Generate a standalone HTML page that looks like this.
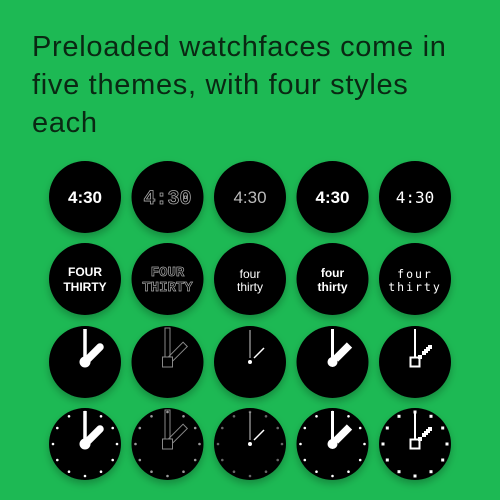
<!DOCTYPE html>
<html><head><meta charset="utf-8"><style>
html,body{margin:0;padding:0;width:500px;height:500px;background:#1db954;overflow:hidden}
h1{position:absolute;left:32px;top:28px;margin:0;width:428px;font:400 29px/38px "Liberation Sans",sans-serif;color:#0a2813;letter-spacing:0.7px}
svg{position:absolute;left:0;top:0}
</style></head><body>
<h1>Preloaded watchfaces come in five themes, with four styles each</h1>
<svg width="500" height="500" viewBox="0 0 500 500">
<defs>
<filter id="sh" x="-30%" y="-30%" width="160%" height="170%"><feDropShadow dx="0" dy="4" stdDeviation="4" flood-color="#000" flood-opacity="0.25"/></filter>
<g id="c"><circle r="36" fill="#000" filter="url(#sh)"/></g>
<g id="t1"><circle cx="0" cy="-32" r="1.3" fill="#fff"/><circle cx="16" cy="-27.7" r="1.3" fill="#fff"/><circle cx="27.7" cy="-16" r="1.3" fill="#fff"/><circle cx="32" cy="0" r="1.3" fill="#fff"/><circle cx="27.7" cy="16" r="1.3" fill="#fff"/><circle cx="16" cy="27.7" r="1.3" fill="#fff"/><circle cx="0" cy="32" r="1.3" fill="#fff"/><circle cx="-16" cy="27.7" r="1.3" fill="#fff"/><circle cx="-27.7" cy="16" r="1.3" fill="#fff"/><circle cx="-32" cy="0" r="1.3" fill="#fff"/><circle cx="-27.7" cy="-16" r="1.3" fill="#fff"/><circle cx="-16" cy="-27.7" r="1.3" fill="#fff"/></g>
<g id="ha"><line x1="0" y1="0" x2="0" y2="-33" stroke="#fff" stroke-width="3.5"/><line x1="2" y1="-2" x2="15" y2="-15" stroke="#fff" stroke-width="7.5" stroke-linecap="round"/><circle r="5.5" fill="#fff"/></g>
<g id="hb" fill="none" stroke="#888" stroke-width="1"><rect x="-2.5" y="-34" width="5" height="29"/><rect x="-3" y="-25" width="6" height="20" transform="rotate(45)"/><rect x="-5" y="-5" width="10" height="10" fill="#000"/></g>
<g id="hc"><line x1="0" y1="-4" x2="0" y2="-32" stroke="#aaa" stroke-width="1.2"/><line x1="4" y1="-4" x2="14" y2="-14" stroke="#fff" stroke-width="1.5"/><circle r="2" fill="#fff"/></g>
<g id="hd"><line x1="0" y1="0" x2="0" y2="-33" stroke="#fff" stroke-width="3"/><line x1="3" y1="-3" x2="17" y2="-17" stroke="#fff" stroke-width="7.5"/><circle r="5" fill="#fff"/></g>
<g id="he" fill="#fff"><rect x="-1" y="-33" width="2" height="28"/><path d="M3,-3 h4 v-4 h4 v-4 h4 v-4 h-4 v4 h-4 v4 h-4z"/><rect x="9" y="-13" width="4" height="4"/><rect x="13" y="-17" width="4" height="4"/><rect x="-4.5" y="-4.5" width="9" height="9" fill="none" stroke="#fff" stroke-width="2"/></g>
</defs>
<g font-family="Liberation Sans,sans-serif" text-anchor="middle" fill="#fff">
<use href="#c" x="85" y="197"/><use href="#c" x="167.5" y="197"/><use href="#c" x="250" y="197"/><use href="#c" x="332.5" y="197"/><use href="#c" x="415" y="197"/>
<text x="85" y="203" font-size="17" font-weight="bold">4:30</text>
<text x="167.5" y="204" font-size="20" font-weight="bold" fill="none" stroke="#aaa" stroke-width="0.8" font-family="Liberation Mono,monospace">4:30</text>
<text x="250" y="203" font-size="17" fill="#bbb" font-weight="300">4:30</text>
<text x="332.5" y="203" font-size="17" font-weight="bold">4:30</text>
<text x="415" y="203" font-size="16" font-family="DejaVu Sans Mono,monospace">4:30</text>
<use href="#c" x="85" y="279"/><use href="#c" x="167.5" y="279"/><use href="#c" x="250" y="279"/><use href="#c" x="332.5" y="279"/><use href="#c" x="415" y="279"/>
<text x="85" y="276" font-size="12" font-weight="bold">FOUR</text><text x="85" y="291" font-size="12" font-weight="bold">THIRTY</text>
<g fill="none" stroke="#aaa" stroke-width="0.7" font-family="Liberation Mono,monospace" font-weight="bold"><text x="167.5" y="276" font-size="14">FOUR</text><text x="167.5" y="291" font-size="14">THIRTY</text></g>
<text x="250" y="278" font-size="12">four</text><text x="250" y="291" font-size="12">thirty</text>
<text x="332.5" y="277" font-size="12" font-weight="bold">four</text><text x="332.5" y="291" font-size="12" font-weight="bold">thirty</text>
<g font-family="DejaVu Sans Mono,monospace" font-size="11.5" letter-spacing="2"><text x="415" y="278">four</text><text x="415" y="291">thirty</text></g>
</g>
<use href="#c" x="85" y="362"/><use href="#c" x="167.5" y="362"/><use href="#c" x="250" y="362"/><use href="#c" x="332.5" y="362"/><use href="#c" x="415" y="362"/>
<use href="#ha" x="85" y="362"/><use href="#hb" x="167.5" y="362"/><use href="#hc" x="250" y="362"/><use href="#hd" x="332.5" y="362"/><use href="#he" x="415" y="362"/>
<use href="#c" x="85" y="444"/><use href="#c" x="167.5" y="444"/><use href="#c" x="250" y="444"/><use href="#c" x="332.5" y="444"/><use href="#c" x="415" y="444"/>
<use href="#t1" x="85" y="444"/>
<g opacity="0.6"><use href="#t1" x="167.5" y="444"/></g>
<g opacity="0.4"><use href="#t1" x="250" y="444"/></g>
<use href="#t1" x="332.5" y="444"/>
<g transform="translate(415,444)" fill="#fff"><rect x="-1.5" y="-33.5" width="3" height="3"/><rect x="14.5" y="-29.2" width="3" height="3"/><rect x="26.2" y="-17.5" width="3" height="3"/><rect x="30.5" y="-1.5" width="3" height="3"/><rect x="26.2" y="14.5" width="3" height="3"/><rect x="14.5" y="26.2" width="3" height="3"/><rect x="-1.5" y="30.5" width="3" height="3"/><rect x="-17.5" y="26.2" width="3" height="3"/><rect x="-29.2" y="14.5" width="3" height="3"/><rect x="-33.5" y="-1.5" width="3" height="3"/><rect x="-29.2" y="-17.5" width="3" height="3"/><rect x="-17.5" y="-29.2" width="3" height="3"/></g>
<use href="#ha" x="85" y="444"/><use href="#hb" x="167.5" y="444"/><use href="#hc" x="250" y="444"/><use href="#hd" x="332.5" y="444"/><use href="#he" x="415" y="444"/>
</svg>
</body></html>
